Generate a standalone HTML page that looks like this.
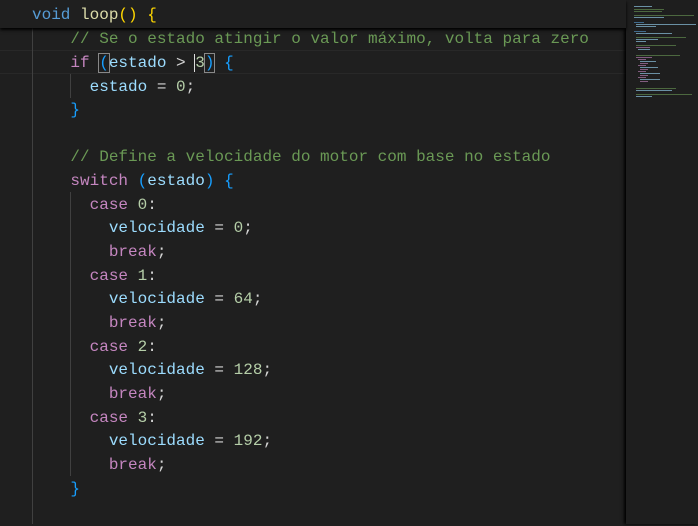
<!DOCTYPE html>
<html><head><meta charset="utf-8"><style>
body{margin:0;width:698px;height:524px;background:#1f1f1f;overflow:hidden;position:relative;font-family:"Liberation Mono",monospace;font-size:16px;}
.l{position:absolute;left:32px;height:23.65px;line-height:23.65px;white-space:pre;color:#d4d4d4;}
.k{color:#569cd6}.f{color:#dcdcaa}.y{color:#ffd700}.c{color:#6a9955}.p{color:#c586c0}.v{color:#9cdcfe}.n{color:#b5cea8}.b{color:#179fff}
.g{position:absolute;width:1px;background:#404040}
#sticky{position:absolute;left:0;top:0;width:626px;height:28px;background:#1f1f1f;box-shadow:0 2px 3px #000;z-index:2}
#hl{position:absolute;left:0;top:50px;width:626px;height:22px;border-top:1px solid #282828;border-bottom:1px solid #282828}
#mm{position:absolute;left:626px;top:0;width:72px;height:524px;background:#1e1e1e;box-shadow:-2px 0 3px #000;}
.box{border:1px solid #888;margin:-1px}
.mmline{position:absolute;height:1px;opacity:.6}
#code{position:absolute;left:0;top:2px;width:626px;height:524px}
</style></head><body>
<div id="hl"></div>
<div class="g" style="left:32px;top:28px;height:496px"></div>
<div class="g" style="left:70px;top:74px;height:24px"></div>
<div class="g" style="left:70px;top:192px;height:284px"></div>
<div id="sticky"><div class="l" style="top:4px"><span class="k">void</span> <span class="f">loop</span><span class="y">()</span> <span class="y">{</span></div></div>
<div id="code">
<div class="l" style="top:26.2px">    <span class="c">// Se o estado atingir o valor máximo, volta para zero</span></div>
<div class="l" style="top:49.85px">    <span class="p">if</span> <span class="b box">(</span><span class="v">estado</span> &gt; <span class="n" style="border-left:1px solid #ddd;margin-left:-1px">3</span><span class="b box">)</span> <span class="b">{</span></div>
<div class="l" style="top:73.5px">      <span class="v">estado</span> = <span class="n">0</span>;</div>
<div class="l" style="top:97.15px">    <span class="b">}</span></div>
<div class="l" style="top:144.45px">    <span class="c">// Define a velocidade do motor com base no estado</span></div>
<div class="l" style="top:168.1px">    <span class="p">switch</span> <span class="b">(</span><span class="v">estado</span><span class="b">)</span> <span class="b">{</span></div>
<div class="l" style="top:191.75px">      <span class="p">case</span> <span class="n">0</span>:</div>
<div class="l" style="top:215.4px">        <span class="v">velocidade</span> = <span class="n">0</span>;</div>
<div class="l" style="top:239.05px">        <span class="p">break</span>;</div>
<div class="l" style="top:262.7px">      <span class="p">case</span> <span class="n">1</span>:</div>
<div class="l" style="top:286.35px">        <span class="v">velocidade</span> = <span class="n">64</span>;</div>
<div class="l" style="top:310px">        <span class="p">break</span>;</div>
<div class="l" style="top:333.65px">      <span class="p">case</span> <span class="n">2</span>:</div>
<div class="l" style="top:357.3px">        <span class="v">velocidade</span> = <span class="n">128</span>;</div>
<div class="l" style="top:380.95px">        <span class="p">break</span>;</div>
<div class="l" style="top:404.6px">      <span class="p">case</span> <span class="n">3</span>:</div>
<div class="l" style="top:428.25px">        <span class="v">velocidade</span> = <span class="n">192</span>;</div>
<div class="l" style="top:451.9px">        <span class="p">break</span>;</div>
<div class="l" style="top:475.55px">    <span class="b">}</span></div>
</div>
<div id="mm">
<div class="mmline" style="left:8px;top:6px;width:18px;background:#9cdcfe"></div>
<div class="mmline" style="left:8px;top:9px;width:30px;background:#6a9955"></div>
<div class="mmline" style="left:8px;top:11px;width:28px;background:#6a9955"></div>
<div class="mmline" style="left:8px;top:15px;width:60px;background:#6a9955"></div>
<div class="mmline" style="left:8px;top:17px;width:30px;background:#9cdcfe"></div>
<div class="mmline" style="left:8px;top:22px;width:10px;background:#569cd6"></div>
<div class="mmline" style="left:10px;top:24px;width:60px;background:#9cdcfe"></div>
<div class="mmline" style="left:10px;top:26px;width:20px;background:#9cdcfe"></div>
<div class="mmline" style="left:8px;top:31px;width:12px;background:#569cd6"></div>
<div class="mmline" style="left:10px;top:33px;width:36px;background:#9cdcfe"></div>
<div class="mmline" style="left:10px;top:37px;width:50px;background:#6a9955"></div>
<div class="mmline" style="left:10px;top:39px;width:22px;background:#9cdcfe"></div>
<div class="mmline" style="left:10px;top:41px;width:10px;background:#9cdcfe"></div>
<div class="mmline" style="left:10px;top:45px;width:40px;background:#6a9955"></div>
<div class="mmline" style="left:10px;top:47px;width:14px;background:#c586c0"></div>
<div class="mmline" style="left:12px;top:49px;width:12px;background:#9cdcfe"></div>
<div class="mmline" style="left:10px;top:55px;width:44px;background:#6a9955"></div>
<div class="mmline" style="left:10px;top:57px;width:16px;background:#c586c0"></div>
<div class="mmline" style="left:12px;top:59px;width:8px;background:#c586c0"></div>
<div class="mmline" style="left:14px;top:61px;width:16px;background:#9cdcfe"></div>
<div class="mmline" style="left:14px;top:63px;width:8px;background:#c586c0"></div>
<div class="mmline" style="left:12px;top:65px;width:8px;background:#c586c0"></div>
<div class="mmline" style="left:14px;top:67px;width:18px;background:#9cdcfe"></div>
<div class="mmline" style="left:14px;top:69px;width:8px;background:#c586c0"></div>
<div class="mmline" style="left:12px;top:71px;width:8px;background:#c586c0"></div>
<div class="mmline" style="left:14px;top:73px;width:20px;background:#9cdcfe"></div>
<div class="mmline" style="left:14px;top:75px;width:8px;background:#c586c0"></div>
<div class="mmline" style="left:12px;top:77px;width:8px;background:#c586c0"></div>
<div class="mmline" style="left:14px;top:79px;width:20px;background:#9cdcfe"></div>
<div class="mmline" style="left:14px;top:81px;width:8px;background:#c586c0"></div>
<div class="mmline" style="left:10px;top:88px;width:40px;background:#6a9955"></div>
<div class="mmline" style="left:10px;top:90px;width:36px;background:#9cdcfe"></div>
<div class="mmline" style="left:10px;top:94px;width:56px;background:#6a9955"></div>
<div class="mmline" style="left:10px;top:96px;width:16px;background:#9cdcfe"></div>
</div>
</body></html>
